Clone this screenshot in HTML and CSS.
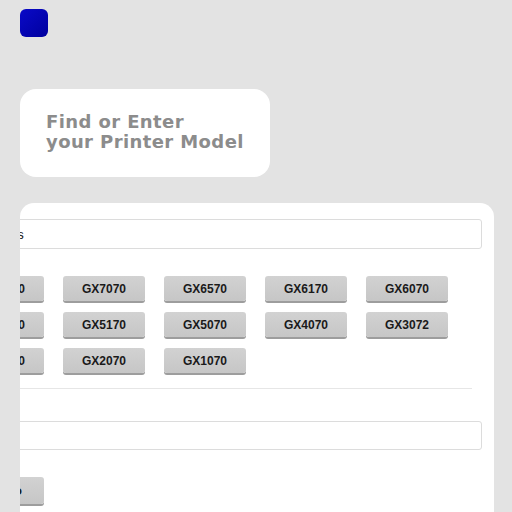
FILE: index.html
```html
<!DOCTYPE html>
<html>
<head>
<meta charset="utf-8">
<link rel="stylesheet" href="styles.css">
</head>
<body>
<header class="top">
  <div class="logo"></div>
</header>
<section class="intro">
  <h1 class="intro-title">Find or Enter<br>your Printer Model</h1>
</section>
<section class="panel">
  <div class="panel-inner">
    <div class="field"><span class="field-text">Printers</span></div>
    <div class="models">
      <button class="model">GX7080</button>
      <button class="model">GX7070</button>
      <button class="model">GX6570</button>
      <button class="model">GX6170</button>
      <button class="model">GX6070</button>
      <button class="model">GX5570</button>
      <button class="model">GX5170</button>
      <button class="model">GX5070</button>
      <button class="model">GX4070</button>
      <button class="model">GX3072</button>
      <button class="model">GX3070</button>
      <button class="model">GX2070</button>
      <button class="model">GX1070</button>
    </div>
    <hr class="divider">
    <div class="field field-2"></div>
    <div class="actions"><button class="go">Go</button></div>
  </div>
</section>
</body>
</html>
```
FILE: styles.css
```css
* { box-sizing: border-box; }
html, body { margin: 0; padding: 0; }
body {
  background: #e3e3e3;
  font-family: "Liberation Sans", Arial, sans-serif;
  height: 512px;
  overflow: hidden;
}
.top {
  padding: 9px 20px 0;
  height: 37px;
}
.logo {
  width: 28px;
  height: 28px;
  border-radius: 6px;
  background: linear-gradient(135deg, #0a0ac8, #00009e);
}
.intro {
  margin: 52px 0 0 20px;
  width: 250px;
  height: 88px;
  background: #fff;
  border-radius: 16px;
  padding: 23px 0 0 26px;
}
.intro-title {
  margin: 0;
  font-family: "DejaVu Sans", sans-serif;
  font-weight: bold;
  font-size: 18px;
  line-height: 20px;
  color: #8c8c8c;
  letter-spacing: 0.4px;
}
.panel {
  margin: 26px 0 0 20px;
  width: 474px;
  height: 320px;
  background: #fff;
  border-radius: 14px 14px 0 0;
  overflow: hidden;
}
.panel-inner {
  margin-left: -60px;
  padding: 16px 12px 0 0;
}
.field {
  height: 30px;
  border: 1px solid #dcdcdc;
  border-radius: 3px;
  display: flex;
  align-items: center;
  padding-left: 18px;
  font-size: 13px;
  color: #111;
}
.models {
  display: grid;
  grid-template-columns: repeat(5, 82px);
  column-gap: 19px;
  row-gap: 11px;
  margin: 27px 0 0 2px;
}
.model, .go {
  height: 25px;
  border: none;
  border-radius: 3px;
  background: linear-gradient(#d2d2d2, #c6c6c6);
  box-shadow: 0 2px 0 #9d9d9d;
  font-family: "Liberation Sans", Arial, sans-serif;
  font-weight: bold;
  font-size: 12px;
  color: #1a1a1a;
  padding: 0;
}
.divider {
  margin: 15px 10px 0 60px;
  border: none;
  border-top: 1px solid #e6e6e6;
}
.field-2 {
  margin-top: 32px;
  height: 29px;
}
.actions {
  margin: 27px 0 0 2px;
}
.go {
  width: 82px;
  height: 27px;
  font-size: 13px;
  text-align: right;
  padding-right: 22px;
}
```
